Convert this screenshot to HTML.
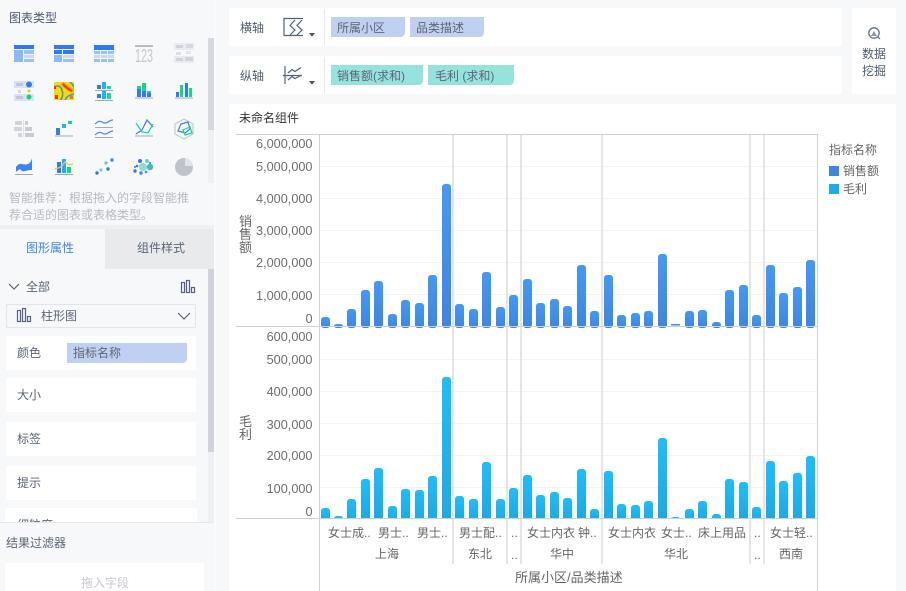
<!DOCTYPE html>
<html lang="zh">
<head>
<meta charset="utf-8">
<title>图表</title>
<style>
html,body{margin:0;padding:0;width:906px;height:591px;overflow:hidden;background:#f7f8fa}
svg{display:block;position:absolute;left:0;top:0}
text{font-family:"Liberation Sans","Noto Sans CJK SC",sans-serif;font-size:12px;fill:#5c6675}
.n{font-size:12.7px;fill:#6e6e6e;text-anchor:end}
.a{fill:#666}
.t{font-size:13px}
.m{fill:#4d5a70}
.w{fill:#fff}
.u{fill:url(#g1)}
.l{fill:url(#g2)}
.bb rect{width:9px;rx:3px;ry:3px}
.ic{fill:none;stroke:#55627a;stroke-width:1.2}
</style>
</head>
<body>
<svg width="906" height="591" viewBox="0 0 906 591" xmlns="http://www.w3.org/2000/svg">
<defs>
<linearGradient id="g1" x1="0" y1="0" x2="0" y2="1"><stop offset="0" stop-color="#4499f6"/><stop offset="1" stop-color="#3e86dc"/></linearGradient>
<linearGradient id="g2" x1="0" y1="0" x2="0" y2="1"><stop offset="0" stop-color="#1fbdfc"/><stop offset="1" stop-color="#1ea8e0"/></linearGradient>
<clipPath id="clipFine"><rect x="0" y="500" width="214" height="22"/></clipPath>
<clipPath id="clipHeat"><rect x="54" y="82" width="20" height="18"/></clipPath>
</defs>

<!-- Sidebar -->
<rect x="214" y="0" width="1.5" height="591" fill="#fdfdfe"/>
<text x="9" y="22" class="m">图表类型</text>
<rect x="208" y="38" width="6" height="145" fill="#eff0f3"/>
<rect x="208" y="38" width="6" height="92" fill="#d6d8df"/>

<!-- Row 1 icons -->
<g>
<rect x="14" y="45" width="20" height="4" fill="#2f7bf5"/><rect x="14" y="50" width="9" height="12" fill="#8fb8f8"/><rect x="24" y="50" width="10" height="4" fill="#9dbff8"/><rect x="24" y="55" width="10" height="3" fill="#c7d8f8"/><rect x="24" y="59" width="10" height="3" fill="#9dbff8"/>
<rect x="54" y="45" width="20" height="4" fill="#2f7bf5"/><rect x="54" y="50" width="8" height="4" fill="#2f7bf5"/><rect x="63" y="50" width="11" height="4" fill="#2f7bf5"/><rect x="54" y="55" width="8" height="7" fill="#8fb8f8"/><rect x="63" y="55" width="11" height="3" fill="#c7d8f8"/><rect x="63" y="59" width="11" height="3" fill="#9dbff8"/>
<rect x="94" y="45" width="20" height="5" fill="#2f7bf5"/>
<rect x="94" y="51" width="6" height="3" fill="#9dbff8"/><rect x="101" y="51" width="6" height="3" fill="#9dbff8"/><rect x="108" y="51" width="6" height="3" fill="#9dbff8"/>
<rect x="94" y="55" width="6" height="3" fill="#c7d8f8"/><rect x="101" y="55" width="6" height="3" fill="#c7d8f8"/><rect x="108" y="55" width="6" height="3" fill="#c7d8f8"/>
<rect x="94" y="59" width="6" height="3" fill="#9dbff8"/><rect x="101" y="59" width="6" height="3" fill="#9dbff8"/><rect x="108" y="59" width="6" height="3" fill="#9dbff8"/>
<rect x="135" y="45" width="18" height="2" fill="#b9bcc4"/>
<text x="135" y="62" textLength="18" lengthAdjust="spacingAndGlyphs" style="font-size:18px;fill:#c4c7cd">123</text>
<rect x="174" y="43" width="20" height="7" fill="#e8ecf2"/><rect x="174" y="56" width="20" height="7" fill="#e8ecf2"/>
<rect x="176" y="45" width="7" height="3" fill="#cfd2d8"/><rect x="186" y="44" width="7" height="4" fill="#d6d9de"/><rect x="176" y="52" width="5" height="3" fill="#dcdfe3"/><rect x="186" y="51" width="5" height="3" fill="#e2e4e8"/><rect x="176" y="58" width="7" height="3" fill="#cfd2d8"/><rect x="185" y="57" width="8" height="4" fill="#d0d3d9"/>
</g>

<!-- Row 2 icons -->
<g>
<rect x="14" y="81" width="20" height="7" fill="#d5e3f8"/><rect x="14" y="94" width="20" height="7" fill="#d5e3f8"/>
<rect x="16" y="83" width="7" height="3" fill="#c3c7cf"/><rect x="18" y="90" width="3" height="3" fill="#d5d7dc"/><rect x="16" y="96" width="7" height="3" fill="#c3c7cf"/>
<circle cx="29" cy="84.5" r="3" fill="#2f7bf5"/><circle cx="29" cy="91" r="1.5" fill="#f8c21c"/><circle cx="29" cy="97" r="2.5" fill="#12d96f"/>

<g clip-path="url(#clipHeat)">
<rect x="54" y="82" width="20" height="18" fill="#f8dc00"/>
<path d="M54 87Q60 84 62 90T60 101" fill="none" stroke="#4c8fe0" stroke-width="1.600"/>
<path d="M69 81Q74 85 75 90" fill="none" stroke="#4c8fe0" stroke-width="1.600"/>
<path d="M65 101Q66 95 75 94" fill="none" stroke="#4c8fe0" stroke-width="1.600"/>
<path d="M62 83Q66 88 73 91" fill="none" stroke="#f79a1c" stroke-width="4"/>
<path d="M63 84Q66 88 72 91" fill="none" stroke="#ee3a1c" stroke-width="2"/>
<rect x="55" y="95" width="3" height="4" fill="#ee3a1c"/><rect x="54" y="86" width="2" height="3" fill="#ee3a1c"/><rect x="70" y="96" width="3" height="3" fill="#f0701c"/>
</g>

<rect x="95" y="90" width="18" height="1" fill="#a5a8b0"/><rect x="95" y="100" width="18" height="1" fill="#a5a8b0"/>
<rect x="97" y="85" width="4" height="4" fill="#2f7bf5"/><rect x="102" y="82" width="4" height="7" fill="#1cb4ee"/><rect x="107" y="86" width="4" height="3" fill="#12d9a0"/>
<rect x="97" y="94" width="4" height="4" fill="#2f7bf5"/><rect x="102" y="91" width="4" height="8" fill="#1cb4ee"/><rect x="107" y="93" width="4" height="6" fill="#12d9a0"/>

<rect x="135" y="97.500" width="18" height="1" fill="#a5a8b0"/>
<rect x="137" y="86" width="4" height="3" fill="#12d98a"/><rect x="137" y="89" width="4" height="8" fill="#2f7bf5"/>
<rect x="142" y="83" width="4" height="8" fill="#12d98a"/><rect x="142" y="91" width="4" height="6" fill="#2f7bf5"/>
<rect x="147" y="91" width="4" height="2" fill="#12d98a"/><rect x="147" y="93" width="4" height="4" fill="#2f7bf5"/>

<rect x="175" y="97.500" width="18" height="1" fill="#a5a8b0"/>
<rect x="176" y="92" width="3" height="5" fill="#2f7bf5"/><rect x="180" y="85" width="3" height="12" fill="#12d98a"/><rect x="185" y="83" width="3" height="14" fill="#2f7bf5"/><rect x="189" y="88" width="3" height="9" fill="#12d98a"/>
</g>

<!-- Row 3 icons -->
<g>
<rect x="23" y="120" width="1" height="17" fill="#e0e2e6"/>
<rect x="15" y="121" width="7" height="4" fill="#d2d4da"/><rect x="14" y="127" width="8" height="4" fill="#d2d4da"/><rect x="18" y="133" width="4" height="4" fill="#d2d4da"/>
<rect x="25" y="121" width="3" height="4" fill="#c8cbd2"/><rect x="25" y="127" width="7" height="4" fill="#c8cbd2"/><rect x="25" y="133" width="9" height="4" fill="#c8cbd2"/>

<rect x="55" y="135.500" width="18" height="1" fill="#a5a8b0"/>
<rect x="56" y="128" width="4" height="7" fill="#3a7ee8"/><rect x="62" y="124" width="4" height="4" fill="#1cb8f0"/><rect x="68" y="121" width="4" height="3" fill="#12d98a"/>

<path d="M95 124q4-4 7-2t6 0 5-2" fill="none" stroke="#4a8cf0" stroke-width="1.2"/>
<rect x="95" y="127" width="18" height="1" fill="#a5a8b0"/>
<path d="M95 135q4-4 7-2t6 0 5-2" fill="none" stroke="#4a8cf0" stroke-width="1.2"/>
<rect x="95" y="137" width="18" height="1" fill="#a5a8b0"/>

<rect x="135" y="135.500" width="18" height="1" fill="#a5a8b0"/>
<path d="M136 134L142 130L147 120L153 127" fill="none" stroke="#3a7ee8" stroke-width="1.2"/>
<path d="M136 123L142 132L148 133L153 124" fill="none" stroke="#12d98a" stroke-width="1.2"/>

<path d="M184 119L193 124V134L184 139L175 134V124Z" fill="none" stroke="#c6cad0" stroke-width="1.2"/>
<path d="M178 131L181 124L188 122L190 129L185 133Z" fill="none" stroke="#3a7ee8" stroke-width="1.2"/>
<path d="M183 130L190 127L192 133L185 135Z" fill="none" stroke="#12d98a" stroke-width="1.2"/>
</g>

<!-- Row 4 icons -->
<g>
<path d="M16 167Q19 163 22 164T28 164T32 158V170Q28 170 25 171T21 170T16 172Z" fill="#3a84f5"/>
<rect x="15" y="174" width="18" height="1" fill="#a5a8b0"/>
<rect x="55" y="174" width="18" height="1" fill="#a5a8b0"/>
<rect x="57" y="162" width="4" height="11" fill="#2f7bf5"/><rect x="62" y="159" width="4" height="14" fill="#1cb4ee"/><rect x="67" y="167" width="4" height="6" fill="#12d98a"/>
<path d="M55 169L61 167L65 162L69 165L73 164" fill="none" stroke="#f5c542" stroke-width="1.2"/>
<circle cx="97" cy="173" r="1.7" fill="#3a78d8"/><circle cx="101" cy="170" r="1.6" fill="#6fd4cc"/><circle cx="108" cy="169" r="1.7" fill="#3a78d8"/><circle cx="106" cy="163" r="1.6" fill="#5fcdc5"/><circle cx="112" cy="160" r="1.7" fill="#3a8ce0"/>
<circle cx="143" cy="167" r="4" fill="#8fdcd5"/><circle cx="150" cy="167" r="3.200" fill="#3fbdb8"/><circle cx="147" cy="161" r="2" fill="#6fd0ca"/>
<circle cx="140" cy="161" r="2" fill="#3a78d8"/><circle cx="135" cy="171" r="1.700" fill="#3a78d8"/><circle cx="137" cy="166" r="1.300" fill="#3a78d8"/><circle cx="141" cy="173" r="1.700" fill="#3a8ce0"/><circle cx="146" cy="172" r="1.300" fill="#3a8ce0"/><circle cx="150" cy="163" r="1.200" fill="#5a90e0"/><circle cx="135" cy="167" r="1" fill="#3a78d8"/>
<circle cx="184" cy="167" r="9" fill="#bfc3cc"/>
<path d="M185 158A9 9 0 0 1 193 166H185Z" fill="#e2e4e8"/>
</g>

<text x="9" y="202" style="fill:#b6bac2">智能推荐：根据拖入的字段智能推</text>
<text x="9" y="219" style="fill:#b6bac2">荐合适的图表或表格类型。</text>

<!-- Tabs -->
<rect x="0" y="225" width="214" height="4" fill="#eff0f3"/>
<rect x="105" y="229" width="109" height="40" fill="#e9eaec"/>
<text x="26" y="252" style="fill:#3d85f0">图形属性</text>
<text x="137" y="252">组件样式</text>

<!-- Scrollbar lower -->
<rect x="208" y="269" width="6" height="253" fill="#eff0f3"/>
<rect x="208" y="269" width="6" height="183" fill="#d0d3db"/>

<!-- All row -->
<path d="M9 284L14 289L19 284" class="ic"/>
<text x="26" y="291">全部</text>
<g class="ic"><rect x="181.500" y="282.500" width="3" height="10"/><rect x="186.500" y="280.500" width="3" height="12"/><rect x="191.500" y="287.500" width="3" height="5"/></g>

<rect x="6.500" y="304.500" width="189" height="23" fill="#f7f8fa" stroke="#e3e5e9"/>
<g class="ic"><rect x="17.500" y="310.500" width="3" height="11"/><rect x="22.500" y="308.500" width="3" height="13"/><rect x="27.500" y="316.500" width="3" height="5"/></g>
<text x="41" y="320">柱形图</text>
<path d="M178 313L184 319L190 313" class="ic"/>

<!-- Attribute boxes -->
<rect x="6" y="336" width="190" height="34" class="w"/>
<rect x="6" y="378" width="190" height="34" class="w"/>
<rect x="6" y="422" width="190" height="34" class="w"/>
<rect x="6" y="466" width="190" height="34" class="w"/>
<rect x="5" y="508" width="192" height="14" class="w"/>
<text x="17" y="357">颜色</text>
<path d="M67 343H187V358Q187 363 182 363H67Z" fill="#c0d0f0"/>
<text x="73" y="357">指标名称</text>
<text x="17" y="399">大小</text>
<text x="17" y="443">标签</text>
<text x="17" y="487">提示</text>
<text x="17" y="529" clip-path="url(#clipFine)">细粒度</text>

<rect x="0" y="522" width="214" height="1" fill="#e6e8eb"/>
<text x="6" y="547">结果过滤器</text>
<rect x="5" y="563" width="199" height="28" class="w"/>
<text x="81" y="587" style="fill:#c7cad0">拖入字段</text>

<!-- Top boxes -->
<rect x="229" y="8" width="613" height="38" class="w"/>
<rect x="229" y="56" width="613" height="38" class="w"/>
<rect x="852" y="8" width="44" height="86" class="w"/>
<text x="240" y="32" class="m">横轴</text>
<text x="240" y="80" class="m">纵轴</text>
<g fill="none" stroke="#55627a" stroke-width="1.2">
<path d="M284 36V18.500H303M284 35.500H303"/>
<path d="M295 20L290 25.500L295 30L290 35"/>
<path d="M302 20L297 25.500L302 30L297 35"/>
<path d="M285 66V84M283 75.500H302"/>
<path d="M288 73L292 69.500L295 71.500L301 67.500"/>
<path d="M288 80L292 76.500L295 78.500L301 75.500"/>
</g>
<path d="M309 33H315L312 36.500Z" fill="#3f4a5c"/>
<path d="M309 81H315L312 84.500Z" fill="#3f4a5c"/>
<rect x="324" y="9" width="1" height="36" fill="#e8e9ec"/>
<rect x="324" y="57" width="1" height="36" fill="#e8e9ec"/>

<path d="M331 17H405V32Q405 37 400 37H331Z" fill="#c0d0f0"/>
<path d="M410 17H484V32Q484 37 479 37H410Z" fill="#c0d0f0"/>
<text x="337" y="32">所属小区</text>
<text x="416" y="32">品类描述</text>
<path d="M331 65H423V80Q423 85 418 85H331Z" fill="#96e3dc"/>
<path d="M428 65H514V80Q514 85 509 85H428Z" fill="#96e3dc"/>
<text x="337" y="80">销售额(求和)</text>
<text x="435" y="80">毛利 (求和)</text>

<circle cx="874" cy="33" r="5.200" fill="none" stroke="#66738c" stroke-width="1.300"/>
<path d="M871 36L874 31L877 36Z" fill="#8a95a8"/>
<path d="M878 37L880 39" stroke="#66738c" stroke-width="1.300"/>
<text x="862" y="58" class="m">数据</text>
<text x="862" y="75" class="m">挖掘</text>

<!-- Chart panel -->
<rect x="229" y="104" width="667" height="487" class="w"/>
<text x="239" y="122" style="fill:#333">未命名组件</text>

<!-- Grid -->
<g fill="#f4f4f5">
<rect x="320" y="166" width="497" height="1"/><rect x="320" y="198" width="497" height="1"/><rect x="320" y="230" width="497" height="1"/><rect x="320" y="262" width="497" height="1"/><rect x="320" y="294" width="497" height="1"/>
<rect x="320" y="359" width="497" height="1"/><rect x="320" y="391" width="497" height="1"/><rect x="320" y="423" width="497" height="1"/><rect x="320" y="455" width="497" height="1"/><rect x="320" y="487" width="497" height="1"/>
</g>

<!-- Upper bars -->
<g class="bb">
<rect class="u" x="321" y="317" height="11"/><rect class="u" x="334" y="324" height="4"/><rect class="u" x="347" y="309" height="19"/><rect class="u" x="361" y="290" height="38"/><rect class="u" x="374" y="281" height="47"/><rect class="u" x="388" y="314" height="14"/><rect class="u" x="401" y="300" height="28"/><rect class="u" x="415" y="303" height="25"/><rect class="u" x="428" y="275" height="53"/><rect class="u" x="442" y="184" height="144"/><rect class="u" x="455" y="304" height="24"/><rect class="u" x="469" y="309" height="19"/><rect class="u" x="482" y="272" height="56"/><rect class="u" x="496" y="307" height="21"/><rect class="u" x="509" y="295" height="33"/><rect class="u" x="523" y="279" height="49"/>
<rect class="u" x="536" y="303" height="25"/><rect class="u" x="550" y="299" height="29"/><rect class="u" x="563" y="306" height="22"/><rect class="u" x="577" y="265" height="63"/><rect class="u" x="590" y="311" height="17"/><rect class="u" x="604" y="275" height="53"/><rect class="u" x="617" y="315" height="13"/><rect class="u" x="631" y="313" height="15"/><rect class="u" x="644" y="311" height="17"/><rect class="u" x="658" y="254" height="74"/><rect class="u" x="671" y="324" height="1.500" style="rx:0;ry:0"/><rect class="u" x="685" y="311" height="17"/><rect class="u" x="698" y="310" height="18"/><rect class="u" x="712" y="322" height="6"/><rect class="u" x="725" y="290" height="38"/><rect class="u" x="739" y="285" height="43"/><rect class="u" x="752" y="315" height="13"/><rect class="u" x="766" y="265" height="63"/><rect class="u" x="779" y="293" height="35"/><rect class="u" x="793" y="287" height="41"/><rect class="u" x="806" y="260" height="68"/>
</g>

<!-- Lower bars -->
<g class="bb">
<rect class="l" x="321" y="508" height="13"/><rect class="l" x="334" y="516" height="5"/><rect class="l" x="347" y="499" height="22"/><rect class="l" x="361" y="479" height="42"/><rect class="l" x="374" y="468" height="53"/><rect class="l" x="388" y="506" height="15"/><rect class="l" x="401" y="489" height="32"/><rect class="l" x="415" y="490" height="31"/><rect class="l" x="428" y="476" height="45"/><rect class="l" x="442" y="377" height="144"/><rect class="l" x="455" y="496" height="25"/><rect class="l" x="469" y="499" height="22"/><rect class="l" x="482" y="462" height="59"/><rect class="l" x="496" y="499" height="22"/><rect class="l" x="509" y="488" height="33"/><rect class="l" x="523" y="475" height="46"/>
<rect class="l" x="536" y="495" height="26"/><rect class="l" x="550" y="492" height="29"/><rect class="l" x="563" y="498" height="23"/><rect class="l" x="577" y="469" height="52"/><rect class="l" x="590" y="509" height="12"/><rect class="l" x="604" y="471" height="50"/><rect class="l" x="617" y="504" height="17"/><rect class="l" x="631" y="505" height="16"/><rect class="l" x="644" y="501" height="20"/><rect class="l" x="658" y="438" height="83"/><rect class="l" x="671" y="517" height="4"/><rect class="l" x="685" y="509" height="12"/><rect class="l" x="698" y="501" height="20"/><rect class="l" x="712" y="514" height="7"/><rect class="l" x="725" y="479" height="42"/><rect class="l" x="739" y="482" height="39"/><rect class="l" x="752" y="507" height="14"/><rect class="l" x="766" y="461" height="60"/><rect class="l" x="779" y="481" height="40"/><rect class="l" x="793" y="473" height="48"/><rect class="l" x="806" y="456" height="65"/>
</g>
<rect x="320" y="518.500" width="497" height="4" class="w"/>

<!-- Separators -->
<g fill="#e5e5e6">
<rect x="452" y="135" width="2" height="429"/><rect x="506" y="135" width="2" height="429"/><rect x="520" y="135" width="2" height="429"/><rect x="601" y="135" width="2" height="429"/><rect x="749" y="135" width="2" height="429"/><rect x="763" y="135" width="2" height="429"/>
</g>
<g fill="#cfcfd1">
<rect x="236" y="134" width="582" height="1"/>
<rect x="236" y="326" width="582" height="1"/>
<rect x="236" y="518" width="582" height="1"/>
<rect x="319" y="134" width="1" height="457"/>
<rect x="817" y="134" width="1" height="457"/>
</g>

<!-- Y axis labels -->
<text class="n" x="312.500" y="148">6,000,000</text>
<text class="n" x="312.500" y="171">5,000,000</text>
<text class="n" x="312.500" y="203">4,000,000</text>
<text class="n" x="312.500" y="235">3,000,000</text>
<text class="n" x="312.500" y="267">2,000,000</text>
<text class="n" x="312.500" y="300">1,000,000</text>
<text class="n" x="312.500" y="323">0</text>
<text class="n" x="312.500" y="341">600,000</text>
<text class="n" x="312.500" y="364">500,000</text>
<text class="n" x="312.500" y="396">400,000</text>
<text class="n" x="312.500" y="429">300,000</text>
<text class="n" x="312.500" y="460">200,000</text>
<text class="n" x="312.500" y="493">100,000</text>
<text class="n" x="312.500" y="516">0</text>

<text class="a t" x="239" y="226">销</text>
<text class="a t" x="239" y="239">售</text>
<text class="a t" x="239" y="252">额</text>
<text class="a t" x="239" y="426">毛</text>
<text class="a t" x="239" y="439">利</text>

<!-- X labels -->
<text class="a" x="328" y="537">女士成..</text>
<text class="a" x="378" y="537">男士..</text>
<text class="a" x="417" y="537">男士..</text>
<text class="a" x="459" y="537">男士配..</text>
<text class="a" x="511" y="537">..</text>
<text class="a" x="527" y="537">女士内衣</text>
<text class="a" x="578" y="537">钟..</text>
<text class="a" x="608" y="537">女士内衣</text>
<text class="a" x="661" y="537">女士..</text>
<text class="a" x="698" y="537">床上用品</text>
<text class="a" x="754" y="537">..</text>
<text class="a" x="770" y="537">女士轻..</text>
<text class="a" x="375" y="558">上海</text>
<text class="a" x="468" y="558">东北</text>
<text class="a" x="511" y="559">..</text>
<text class="a" x="550" y="558">华中</text>
<text class="a" x="664" y="558">华北</text>
<text class="a" x="754" y="559">..</text>
<text class="a" x="779" y="558">西南</text>
<text class="a t" x="515" y="582">所属小区/品类描述</text>

<!-- Legend -->
<text class="a" x="829" y="154">指标名称</text>
<rect x="829" y="166" width="10" height="10" fill="#3f87e3"/>
<text class="a" x="843" y="175">销售额</text>
<rect x="829" y="184" width="10" height="10" fill="#1badea"/>
<text class="a" x="843" y="193">毛利</text>
</svg>
</body>
</html>
